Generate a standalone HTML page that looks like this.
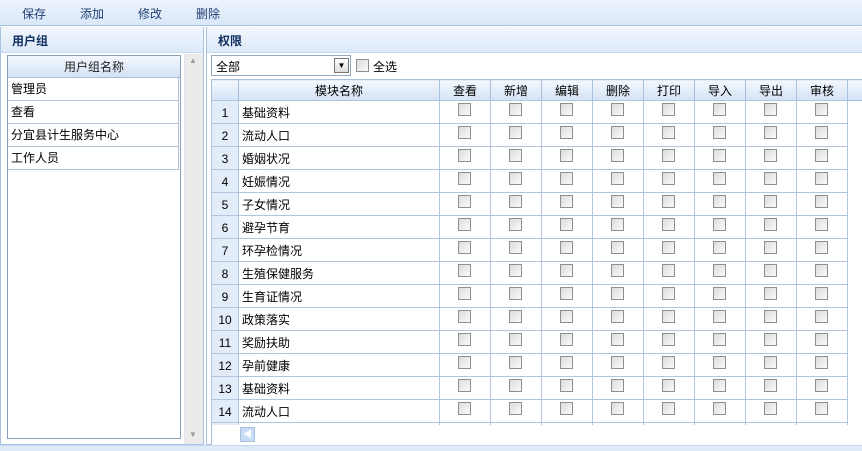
<!DOCTYPE html>
<html><head><meta charset="utf-8"><style>
*{margin:0;padding:0;box-sizing:border-box}
body{width:862px;height:451px;overflow:hidden;background:#fff;font-family:"Liberation Sans","Noto Sans CJK SC",sans-serif;font-size:12px;color:#000;position:relative}
.a{position:absolute}
.tb{left:0;top:0;width:862px;height:26px;background:linear-gradient(#eef4fc,#d9e7f8);border-bottom:1px solid #a9c2e2}
.tb span{position:absolute;top:5px;color:#1f3f74;font-size:12px}
.ph{height:26px;background:linear-gradient(#f2f7fd,#dce9f8);border-bottom:1px solid #c5d8ef;font-weight:bold;color:#0e2d5f;padding:5px 0 0 11px}
.cb{position:absolute;width:13px;height:13px;border:1px solid #8e8f8f;background:linear-gradient(135deg,#dcdcdc,#fafafa)}
table{border-collapse:collapse;table-layout:fixed}
td{border:1px solid #b3c5dc;height:23px;padding:0 3px;position:relative;white-space:nowrap;overflow:hidden;line-height:20px;vertical-align:top;padding-top:2px}
th{border:1px solid #a8bfdd;height:21px;font-weight:normal;background:linear-gradient(#f4f8fd,#d3e3f6);}
td.n{background:#e3edfa;text-align:center}
</style></head><body>
<div class="a tb"><span style="left:22px">保存</span><span style="left:80px">添加</span><span style="left:138px">修改</span><span style="left:196px">删除</span></div>
<div class="a" style="left:0;top:27px;width:204px;height:418px;border:1px solid #a9c2e2;border-top:0;background:#fff">
<div class="ph">用户组</div>
</div>
<div class="a" style="left:7px;top:55px;width:174px;height:384px;border:1px solid #8aa0b8;background:#fff">
<div style="height:22px;background:linear-gradient(#f4f8fd,#d3e3f6);border-bottom:1px solid #a8bfdd;text-align:center;line-height:22px;color:#222">用户组名称</div>
<div style="height:23px;border-bottom:1px solid #b4c3d4;line-height:22px;padding-left:3px">管理员</div>
<div style="height:23px;border-bottom:1px solid #b4c3d4;line-height:22px;padding-left:3px">查看</div>
<div style="height:23px;border-bottom:1px solid #b4c3d4;line-height:22px;padding-left:3px">分宜县计生服务中心</div>
<div style="height:23px;border-bottom:1px solid #b4c3d4;line-height:22px;padding-left:3px">工作人员</div>
<div style="position:absolute;right:0;top:22px;width:2px;height:92px;background:#fff;border-left:1px solid #b4c3d4"></div>
</div>
<div class="a" style="left:184px;top:54px;width:19px;height:390px;background:#ebebeb;border-left:1px solid #dde6f0"></div>
<div class="a" style="left:189px;top:56px;color:#999;font-size:8px">▲</div>
<div class="a" style="left:189px;top:430px;color:#999;font-size:8px">▼</div>
<div class="a" style="left:206px;top:27px;width:656px;height:418px;border-left:1px solid #a9c2e2;border-bottom:1px solid #a9c2e2;background:#fff">
<div class="ph">权限</div>
</div>
<div class="a" style="left:211px;top:55px;width:140px;height:21px;border:1px solid #97a9bf;background:#fff;padding:2px 0 0 4px">全部</div>
<div class="a" style="left:334px;top:58px;width:15px;height:15px;border:1px solid #777;background:linear-gradient(#fff,#ddd);font-size:8px;text-align:center;line-height:14px">▼</div>
<div class="cb" style="left:356px;top:59px"></div>
<div class="a" style="left:373px;top:58px">全选</div>
<div class="a" style="left:211px;top:79px;width:651px;height:346px;overflow:hidden">
<table style="width:651px">
<colgroup><col style="width:27px"><col style="width:201px"><col span="8" style="width:51px"><col></colgroup>
<tr><th></th><th>模块名称</th><th>查看</th><th>新增</th><th>编辑</th><th>删除</th><th>打印</th><th>导入</th><th>导出</th><th>审核</th><th style="border-right:0"></th></tr>
</table>
<div id="rows"></div>
</div>
<div class="a" style="left:211px;top:425px;width:651px;height:20px;background:#fff;border-left:1px solid #a8bfdd"></div>
<div class="a" style="left:240px;top:427px;width:15px;height:15px;background:#c9dcf5;border:1px solid #a8bfdd;color:#fff;font-size:9px;line-height:13px;text-align:center">◀</div>
<div class="a" style="left:0;top:445px;width:862px;height:6px;background:#dfeaf7;border-top:1px solid #c5d8ef"></div>
<script>
var names=["基础资料","流动人口","婚姻状况","妊娠情况","子女情况","避孕节育","环孕检情况","生殖保健服务","生育证情况","政策落实","奖励扶助","孕前健康","基础资料","流动人口",""];
var h='<table style="width:651px;margin-top:-1px"><colgroup><col style="width:27px"><col style="width:201px"><col span="8" style="width:51px"><col></colgroup>';
for(var i=0;i<15;i++){h+='<tr><td class="n">'+(i<14?i+1:'')+'</td><td>'+names[i]+'</td>';for(var j=0;j<8;j++)h+='<td><div class="cb" style="left:18px;top:2px"></div></td>';h+='<td style="border:0"></td></tr>';}
h+='</table>';document.getElementById('rows').innerHTML=h;
</script>
</body></html>
